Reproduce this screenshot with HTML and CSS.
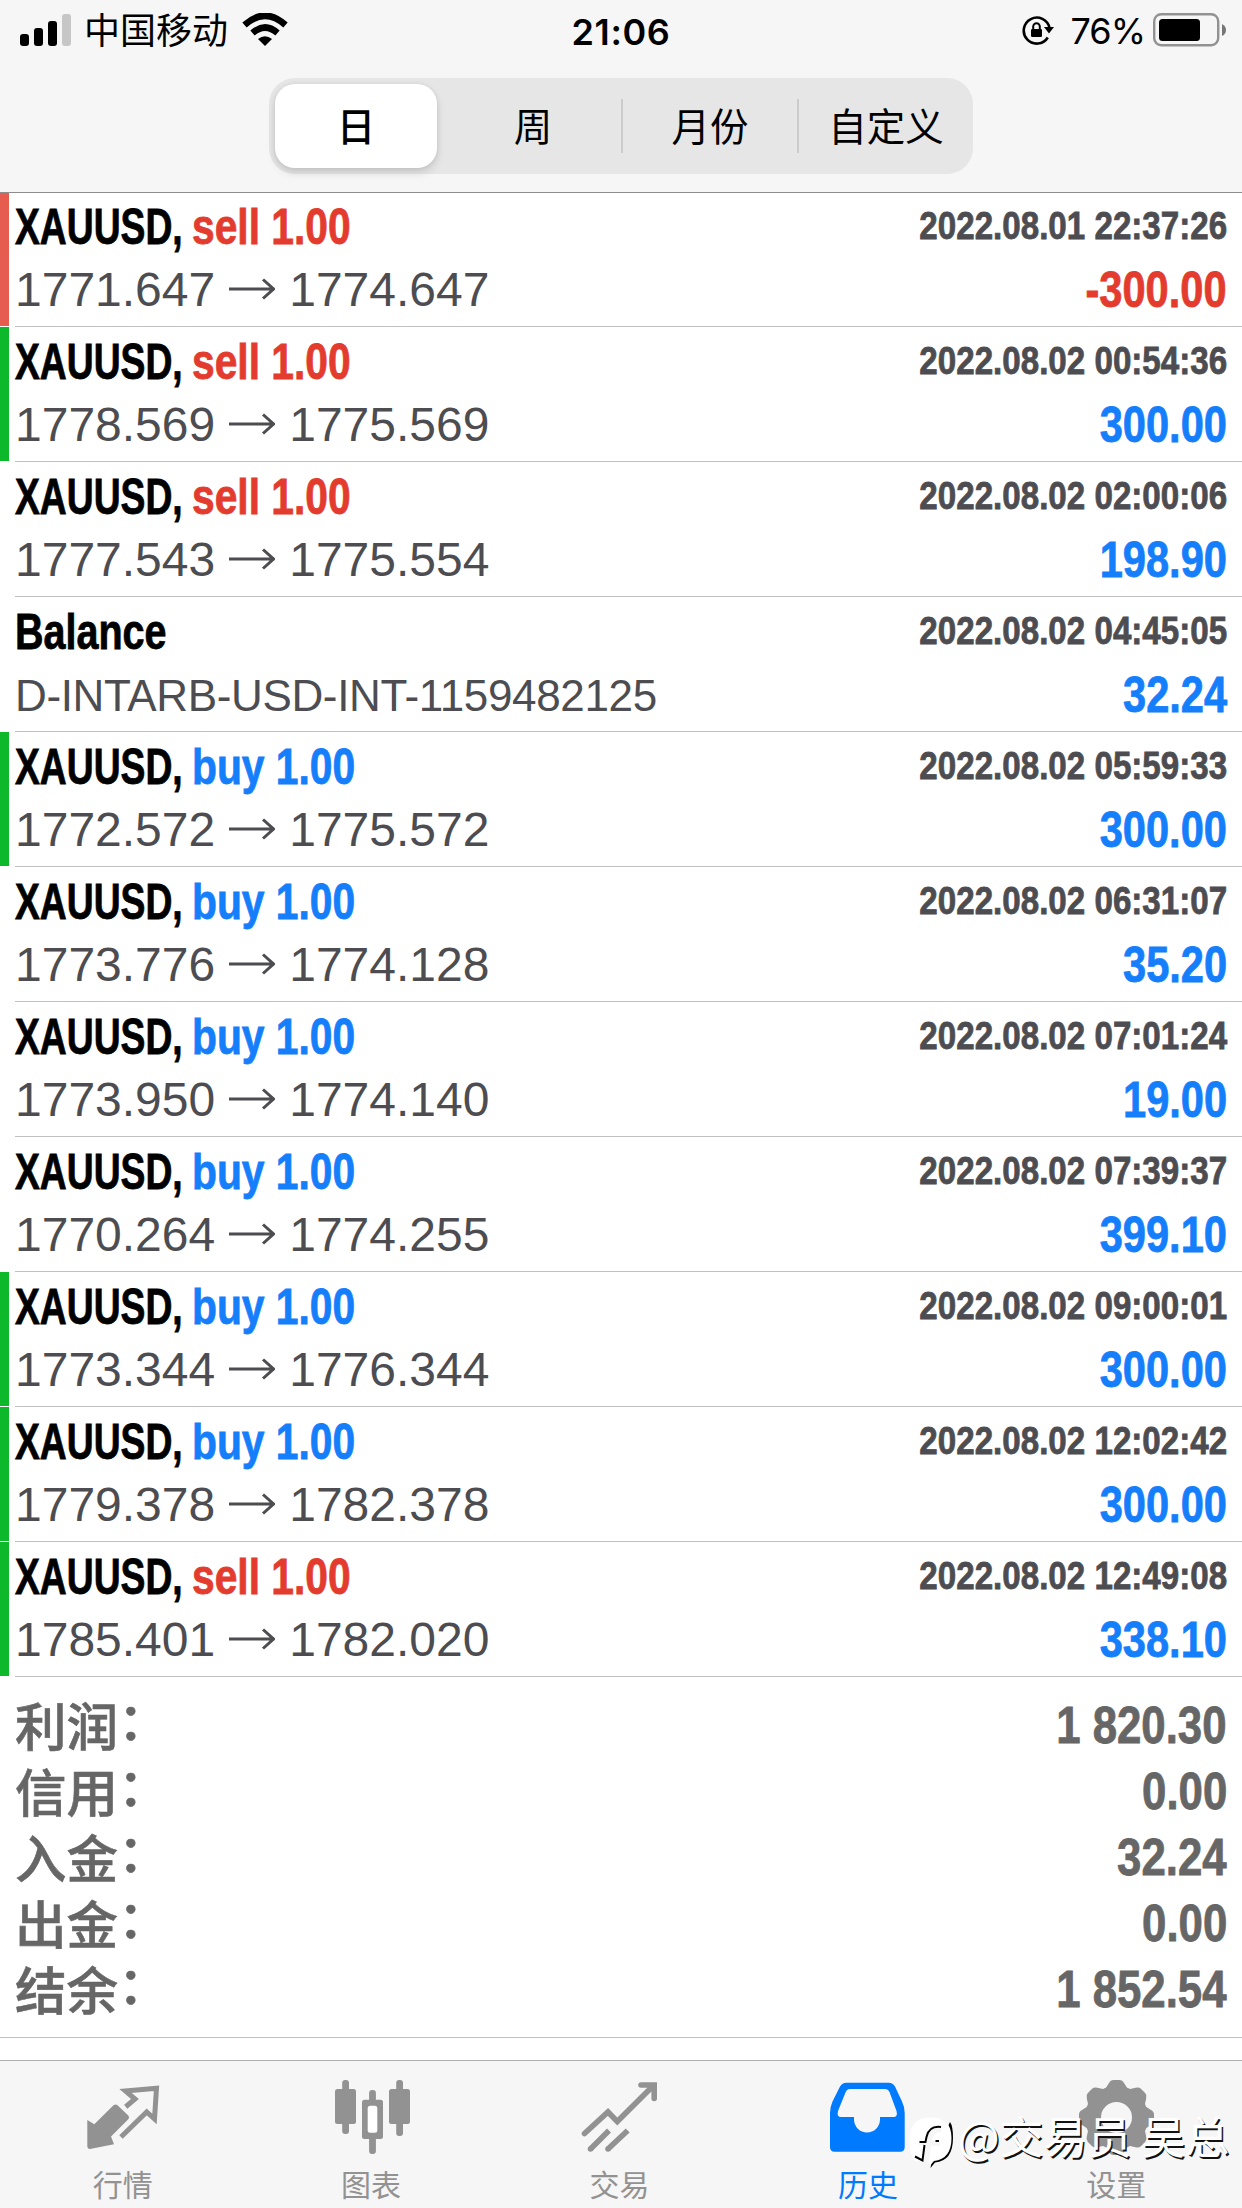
FILE: index.html
```html
<!DOCTYPE html>
<html lang="zh-CN">
<head>
<meta charset="utf-8">
<title>历史</title>
<link rel="stylesheet" href="styles.css">
</head>
<body>
<header class="header">
  <div class="status">
    <div class="status-left">
      <svg class="signal" width="52" height="34" viewBox="0 0 52 34"><rect x="0" y="21" width="9" height="12" rx="3"/><rect x="14" y="15" width="9" height="18" rx="3"/><rect x="28" y="8" width="9" height="25" rx="3"/><rect x="42" y="1" width="9" height="32" rx="3" fill="#c6c6c6"/></svg>
      <span class="carrier">中国移动</span>
      <svg class="wifi" width="46" height="34" viewBox="0 0 46 34"><path d="M2.500 12Q23-6.500 43.500 12" fill="none" stroke="#000" stroke-width="6.500"/><path d="M10.500 20Q23 9 35.500 20" fill="none" stroke="#000" stroke-width="6.500"/><path d="M16 26Q23 20.500 30 26L23 33Z"/></svg>
    </div>
    <span class="clock">21:06</span>
    <div class="status-right">
      <svg class="lock" width="32" height="30" viewBox="0 0 32 30"><path d="M25.800 22.500A13 13 0 1 1 27.500 13" fill="none" stroke="#000" stroke-width="2.600"/><path d="M22 12H32L27 18.500Z"/><rect x="9" y="14" width="11" height="8" rx="1.200"/><path d="M11.200 14V11.500a3.300 3.300 0 0 1 6.600 0V14" fill="none" stroke="#000" stroke-width="2"/></svg>
      <span class="percent">76%</span>
      <svg class="battery" width="74" height="34" viewBox="0 0 74 34"><rect x="1.200" y="1.200" width="64" height="31" rx="7" fill="none" stroke="#929292" stroke-width="2.400"/><rect x="6" y="6" width="41" height="22" rx="3.500"/><path d="M69 11Q73 13 73 17T69 23Z" fill="#777"/></svg>
    </div>
  </div>
  <div class="segments">
    <div class="segment active"><span>日</span></div>
    <div class="segment"><span>周</span></div>
    <div class="segment divided"><span>月份</span></div>
    <div class="segment divided"><span>自定义</span></div>
  </div>
</header>
<main>
  <ul class="deals">
    <li class="deal loss"><div class="line"><b class="name"><span class="symbol">XAUUSD,</span> <span class="side sell">sell 1.00</span></b><span class="date">2022.08.01 22:37:26</span></div><div class="line"><span class="price">1771.647<svg class="arrow" viewBox="0 0 46 22"><path d="M0 11H44M34 1.500L44.500 11L34 20.500"/></svg>1774.647</span><b class="amount sell">-300.00</b></div></li>
    <li class="deal gain"><div class="line"><b class="name"><span class="symbol">XAUUSD,</span> <span class="side sell">sell 1.00</span></b><span class="date">2022.08.02 00:54:36</span></div><div class="line"><span class="price">1778.569<svg class="arrow" viewBox="0 0 46 22"><path d="M0 11H44M34 1.500L44.500 11L34 20.500"/></svg>1775.569</span><b class="amount">300.00</b></div></li>
    <li class="deal"><div class="line"><b class="name"><span class="symbol">XAUUSD,</span> <span class="side sell">sell 1.00</span></b><span class="date">2022.08.02 02:00:06</span></div><div class="line"><span class="price">1777.543<svg class="arrow" viewBox="0 0 46 22"><path d="M0 11H44M34 1.500L44.500 11L34 20.500"/></svg>1775.554</span><b class="amount">198.90</b></div></li>
    <li class="deal"><div class="line"><b class="name"><span class="side balance">Balance</span></b><span class="date">2022.08.02 04:45:05</span></div><div class="line"><span class="price note">D-INTARB-USD-INT-1159482125</span><b class="amount">32.24</b></div></li>
    <li class="deal gain"><div class="line"><b class="name"><span class="symbol">XAUUSD,</span> <span class="side buy">buy 1.00</span></b><span class="date">2022.08.02 05:59:33</span></div><div class="line"><span class="price">1772.572<svg class="arrow" viewBox="0 0 46 22"><path d="M0 11H44M34 1.500L44.500 11L34 20.500"/></svg>1775.572</span><b class="amount">300.00</b></div></li>
    <li class="deal"><div class="line"><b class="name"><span class="symbol">XAUUSD,</span> <span class="side buy">buy 1.00</span></b><span class="date">2022.08.02 06:31:07</span></div><div class="line"><span class="price">1773.776<svg class="arrow" viewBox="0 0 46 22"><path d="M0 11H44M34 1.500L44.500 11L34 20.500"/></svg>1774.128</span><b class="amount">35.20</b></div></li>
    <li class="deal"><div class="line"><b class="name"><span class="symbol">XAUUSD,</span> <span class="side buy">buy 1.00</span></b><span class="date">2022.08.02 07:01:24</span></div><div class="line"><span class="price">1773.950<svg class="arrow" viewBox="0 0 46 22"><path d="M0 11H44M34 1.500L44.500 11L34 20.500"/></svg>1774.140</span><b class="amount">19.00</b></div></li>
    <li class="deal"><div class="line"><b class="name"><span class="symbol">XAUUSD,</span> <span class="side buy">buy 1.00</span></b><span class="date">2022.08.02 07:39:37</span></div><div class="line"><span class="price">1770.264<svg class="arrow" viewBox="0 0 46 22"><path d="M0 11H44M34 1.500L44.500 11L34 20.500"/></svg>1774.255</span><b class="amount">399.10</b></div></li>
    <li class="deal gain"><div class="line"><b class="name"><span class="symbol">XAUUSD,</span> <span class="side buy">buy 1.00</span></b><span class="date">2022.08.02 09:00:01</span></div><div class="line"><span class="price">1773.344<svg class="arrow" viewBox="0 0 46 22"><path d="M0 11H44M34 1.500L44.500 11L34 20.500"/></svg>1776.344</span><b class="amount">300.00</b></div></li>
    <li class="deal gain"><div class="line"><b class="name"><span class="symbol">XAUUSD,</span> <span class="side buy">buy 1.00</span></b><span class="date">2022.08.02 12:02:42</span></div><div class="line"><span class="price">1779.378<svg class="arrow" viewBox="0 0 46 22"><path d="M0 11H44M34 1.500L44.500 11L34 20.500"/></svg>1782.378</span><b class="amount">300.00</b></div></li>
    <li class="deal gain"><div class="line"><b class="name"><span class="symbol">XAUUSD,</span> <span class="side sell">sell 1.00</span></b><span class="date">2022.08.02 12:49:08</span></div><div class="line"><span class="price">1785.401<svg class="arrow" viewBox="0 0 46 22"><path d="M0 11H44M34 1.500L44.500 11L34 20.500"/></svg>1782.020</span><b class="amount">338.10</b></div></li>
  </ul>
  <dl class="summary">
    <div class="total"><dt>利润<span class="colon">：</span></dt><dd>1 820.30</dd></div>
    <div class="total"><dt>信用<span class="colon">：</span></dt><dd>0.00</dd></div>
    <div class="total"><dt>入金<span class="colon">：</span></dt><dd>32.24</dd></div>
    <div class="total"><dt>出金<span class="colon">：</span></dt><dd>0.00</dd></div>
    <div class="total"><dt>结余<span class="colon">：</span></dt><dd>1 852.54</dd></div>
  </dl>
</main>
<nav class="tabs">
  <div class="tab"><svg class="icon" viewBox="0 0 90 84"><path d="M8.300 45L15.300 49.300L34.500 30.300Q36.500 28.500 38.500 30.300L49.300 40.500Q51 42.500 49.300 44.300L32 61.500L35 69.300L11 74Q8.300 74 8.300 71Z"/><path class="stroke" stroke-width="5" d="M46.700 31.700L56 24L46.500 16L77.500 13.200L75.500 44L67.700 37L42 62"/></svg><span>行情</span></div>
  <div class="tab"><svg class="icon" viewBox="0 0 90 84"><rect x="7" y="14" width="21" height="35" rx="2.500"/><rect x="14.200" y="5" width="6.800" height="54" rx="3"/><rect x="61" y="14" width="21" height="35" rx="2.500"/><rect x="68.200" y="5" width="6.800" height="56" rx="3"/><rect x="34" y="24.700" width="21" height="39.300" rx="2.500"/><rect x="41.100" y="15" width="6.800" height="64" rx="3"/><rect x="39.700" y="30.700" width="9.600" height="27" rx="2.500" fill="#fff"/></svg><span>图表</span></div>
  <div class="tab"><svg class="icon" viewBox="0 0 90 84"><path class="stroke" stroke-width="5.600" stroke-linecap="round" d="M8.500 58.500L32 37L41.300 46.500L77 11M65 10H78.200V23.500"/><path class="stroke" stroke-width="5.600" d="M14.500 74L33 55.500M32 74L51.700 55.500"/><circle cx="14.500" cy="74" r="2.800"/><circle cx="32" cy="74" r="2.800"/></svg><span>交易</span></div>
  <div class="tab current"><svg class="icon" viewBox="0 0 90 84"><path fill-rule="evenodd" d="M6 72V38Q6 32 8.500 26.500L16 11.500Q18 7.700 22.500 7.700H64.500Q69 7.700 71 11.500L78 26.500Q80.700 32 80.700 38V72Q80.700 76.700 76 76.700H10.500Q6 76.700 6 72ZM26 14Q23 14 21.700 17L14 36Q12.500 42 17 42H30V44.500A13 13 0 0 0 56 44.500V42H69.500Q74 42 72.500 36L65.500 17Q64 14 61 14Z"/></svg><span>历史</span></div>
  <div class="tab"><svg class="icon gear" viewBox="0 0 90 84"><defs><path id="tooth" d="M-13-26L-7.500-34.500Q-6-37.500-3-37.500H3Q6-37.500 7.500-34.500L13-26Z"/></defs><g transform="translate(43.500 42.500)"><circle r="23.500" fill="none" stroke="#929292" stroke-width="16"/><use href="#tooth"/><use href="#tooth" transform="rotate(45)"/><use href="#tooth" transform="rotate(90)"/><use href="#tooth" transform="rotate(135)"/><use href="#tooth" transform="rotate(180)"/><use href="#tooth" transform="rotate(225)"/><use href="#tooth" transform="rotate(270)"/><use href="#tooth" transform="rotate(315)"/></g></svg><span>设置</span></div>
  <div class="watermark">
    <svg width="48" height="50" viewBox="0 0 48 50"><path d="M40 4Q43 8 43 20Q43 43 25 44.500L20.500 50L22 42Z"/><path fill="#fff" d="M-0.500 21Q-0.500-0.500 21-0.500Q41.500-0.500 41.500 20Q41.500 41 24 43L20 47.500L19 43H5Q-0.500 38-0.500 21Z"/><path fill="#f6f6f6" d="M16 24Q18 9 31 9V14Q23 14 22 23H30V28H21L19 44H12L14 27H9V24Z"/><path d="M31 9Q19 7.500 16.500 19L15.500 24H9.500M14.500 27L12.500 42.500L5 38.500" fill="none" stroke="#000" stroke-width="2"/><path d="M25.500 22H29V24H25.500Z"/></svg>
    <span>@交易员 吴总</span>
  </div>
</nav>
</body>
</html>
```
FILE: styles.css
```css
* { box-sizing: border-box; }
body { margin: 0; width: 1242px; height: 2208px; overflow: hidden; display: flex; flex-direction: column; background: #fff; color: #000; font-family: "Liberation Sans", "Noto Sans CJK SC", sans-serif; }
svg { display: block; flex: none; }
.header { height: 193px; flex: none; background: #f6f6f6; border-bottom: 1px solid #8c8c8c; }
.status { display: grid; grid-template-columns: 1fr auto 1fr; align-items: center; height: 60px; padding: 0 20px; font-family: Inter, "Noto Sans CJK SC", sans-serif; }
.status-left, .status-right { display: flex; align-items: center; }
.status-right { justify-content: flex-end; margin-right: -5px; }
.carrier { margin-left: 12px; padding-top: 2px; font-size: 36px; line-height: 58px; }
.wifi { margin-left: 14px; }
.clock { padding-top: 3px; font-size: 36px; font-weight: 600; letter-spacing: 0.6px; }
.percent { margin: 0 8px 0 17px; padding-top: 2px; font-size: 36px; letter-spacing: -1px; }
.segments { display: flex; width: 704px; height: 96px; margin: 18px auto 0 269px; border-radius: 26px; background: #e6e6e6; }
.segment { flex: 0 0 176px; display: flex; align-items: center; justify-content: center; padding-bottom: 4px; font-family: "Noto Sans CJK SC", sans-serif; font-size: 38.5px; line-height: 60px; }
.active { flex-basis: 162px; margin: 6px 8px 6px 6px; border-radius: 20px; background: #fff; font-weight: 500; box-shadow: 0 5px 8px rgba(0, 0, 0, 0.12), 0 0 5px rgba(0, 0, 0, 0.08); }
.divided { padding-left: 2px; background: linear-gradient(#ccc, #ccc) 0 50% / 2px 54px no-repeat; }
.deals { list-style: none; margin: 0; padding: 0; }
.deal { display: flex; flex-direction: column; height: 135px; padding: 2px 15px 0 15px; background: linear-gradient(#c0c0c0, #c0c0c0) 15px 100% / 100% 1px no-repeat; }
.deal:first-child { height: 134px; padding-top: 1px; }
.loss { background: linear-gradient(#e65d50, #e65d50) 0 0 / 9px 133px no-repeat, linear-gradient(#c0c0c0, #c0c0c0) 15px 100% / 100% 1px no-repeat; }
.gain { background: linear-gradient(#0db92b, #0db92b) 0 0 / 9px 134px no-repeat, linear-gradient(#c0c0c0, #c0c0c0) 15px 100% / 100% 1px no-repeat; }
.line { display: flex; justify-content: space-between; align-items: center; height: 64px; white-space: nowrap; line-height: 56px; }
/* condensed bold face, made by narrowing the regular-width bold */
.name, .amount, .date, dd { font-weight: 700; font-size: 50px; -webkit-text-stroke: 0.8px currentColor; }
.name { display: flex; padding-top: 2px; }
.symbol { width: 177px; transform: scaleX(0.745); transform-origin: 0 50%; }
.side { transform: scaleX(0.815); transform-origin: 0 50%; }
.balance { transform: scaleX(0.79); }
.date { font-size: 39px; color: #4d4d51; transform: scaleX(0.85); transform-origin: 100% 50%; }
.price { display: flex; align-items: center; font-size: 48px; color: #4d4d51; }
.note { font-size: 44px; letter-spacing: -0.35px; padding-top: 2px; }
.arrow { width: 46px; height: 22px; margin: 0 14px 2px; fill: none; stroke: #4d4d51; stroke-width: 3px; }
.amount { transform: scaleX(0.832); transform-origin: 100% 50%; }
.amount, .buy { color: #157efb; }
.name .sell, .amount.sell { color: #e33c2e; }
.summary { height: 361px; margin: 0; padding: 16px 15px 0 15px; border-bottom: 1px solid #c0c0c0; }
.total { display: flex; justify-content: space-between; align-items: center; height: 66px; color: #666; }
dt { padding-bottom: 7px; font-family: "Noto Sans CJK SC", sans-serif; font-size: 51.5px; font-weight: 500; line-height: 59px; -webkit-text-stroke: 0.6px currentColor; }
.colon { line-height: 1; vertical-align: 6px; }
dd { margin: 0; font-size: 51px; line-height: 60px; transform: scaleX(0.858); transform-origin: 100% 50%; }
.tabs { position: relative; display: flex; height: 148px; margin-top: auto; flex: none; background: #f6f6f6; border-top: 1px solid #b0b0b0; }
.tab { flex: 1; display: flex; flex-direction: column; align-items: center; padding-top: 14px; color: #929292; fill: #929292; font-family: "Noto Sans CJK SC", sans-serif; font-size: 30px; line-height: 44px; }
.icon { width: 90px; height: 84px; }
.tab span { margin-top: 2px; padding-right: 3px; }
.stroke { fill: none; stroke: #929292; }
.current { color: #007aff; fill: #007aff; }
.watermark { position: absolute; left: 910px; top: 57px; display: flex; color: #fff; font: 44px/50px "Noto Sans CJK SC", sans-serif; text-shadow: 1.5px 1.5px 0 #111; white-space: nowrap; }
.watermark svg { overflow: visible; }
.watermark span { margin-top: -8px; }
```
